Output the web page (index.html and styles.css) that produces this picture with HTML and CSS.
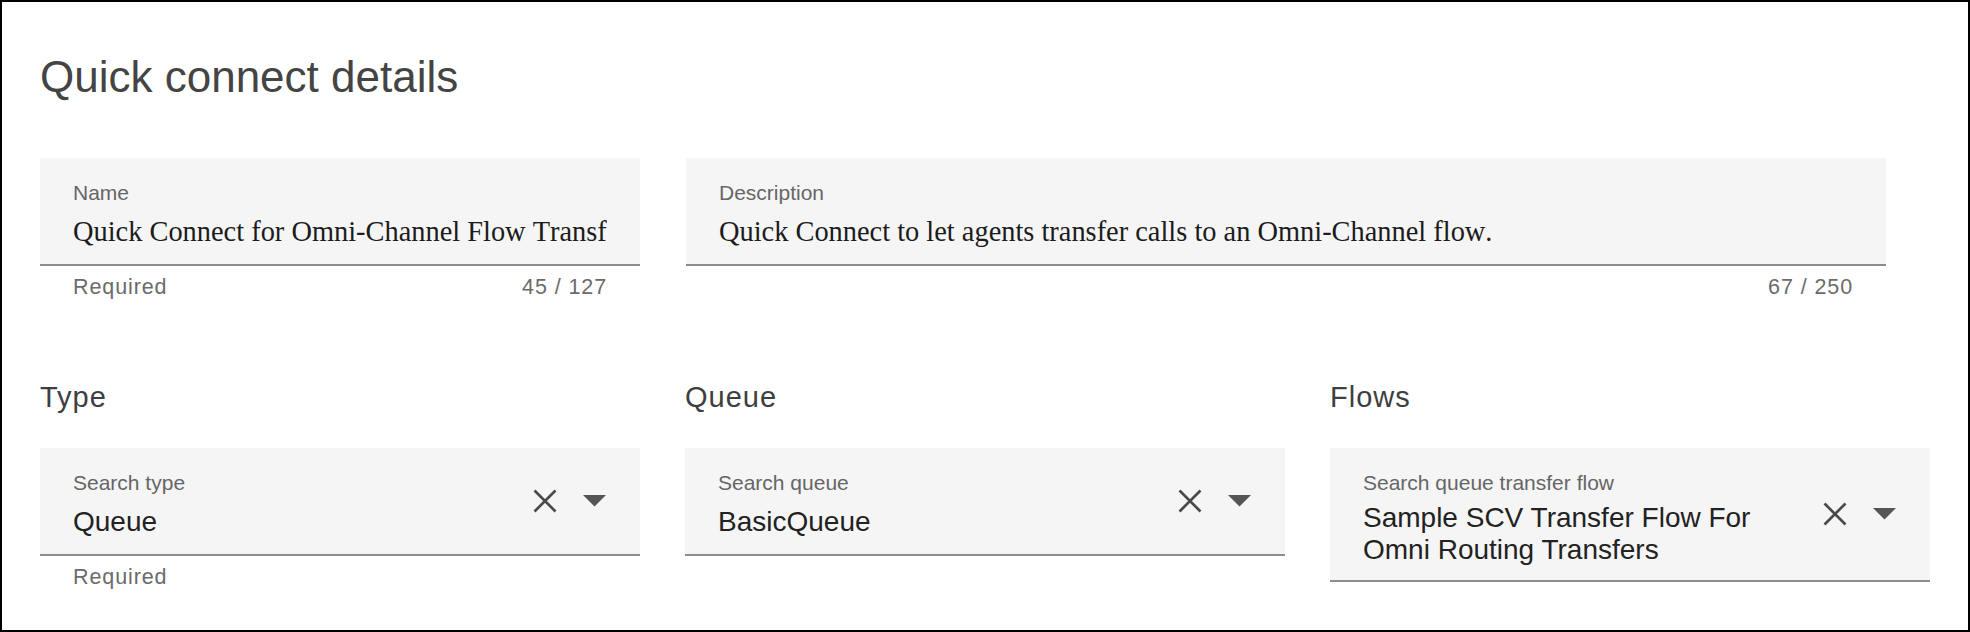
FILE: index.html
```html
<!DOCTYPE html>
<html lang="en">
<head>
<meta charset="utf-8">
<title>Quick connect details</title>
<link rel="stylesheet" href="styles.css">
</head>
<body>
<div class="page">
  <h1 class="title">Quick connect details</h1>

  <div class="row row-top">
    <div class="col">
      <div class="field">
        <div class="field-body">
          <div class="label">Name</div>
          <div class="value value-serif">Quick Connect for Omni-Channel Flow Transfers</div>
        </div>
      </div>
      <div class="helper"><span>Required</span><span class="counter">45 / 127</span></div>
    </div>
    <div class="col">
      <div class="field">
        <div class="field-body">
          <div class="label">Description</div>
          <div class="value value-serif">Quick Connect to let agents transfer calls to an Omni-Channel flow.</div>
        </div>
      </div>
      <div class="helper"><span class="counter">67 / 250</span></div>
    </div>
  </div>

  <div class="row row-bottom">
    <div class="col">
      <h2 class="heading">Type</h2>
      <div class="field">
        <div class="field-body">
          <div class="label">Search type</div>
          <div class="value">Queue</div>
        </div>
        <div class="icons">
          <svg class="icon-close" width="24" height="24" viewBox="0 0 24 24"><path d="M1.5 1.5L22.5 22.5M22.5 1.5L1.5 22.5"/></svg>
          <svg class="icon-arrow" width="23" height="12" viewBox="0 0 23 12"><polygon points="0,0 23,0 11.5,11.5"/></svg>
        </div>
      </div>
      <div class="helper"><span>Required</span></div>
    </div>
    <div class="col">
      <h2 class="heading">Queue</h2>
      <div class="field">
        <div class="field-body">
          <div class="label">Search queue</div>
          <div class="value">BasicQueue</div>
        </div>
        <div class="icons">
          <svg class="icon-close" width="24" height="24" viewBox="0 0 24 24"><path d="M1.5 1.5L22.5 22.5M22.5 1.5L1.5 22.5"/></svg>
          <svg class="icon-arrow" width="23" height="12" viewBox="0 0 23 12"><polygon points="0,0 23,0 11.5,11.5"/></svg>
        </div>
      </div>
    </div>
    <div class="col">
      <h2 class="heading">Flows</h2>
      <div class="field field-multi">
        <div class="field-body">
          <div class="label">Search queue transfer flow</div>
          <div class="value">Sample SCV Transfer Flow For Omni Routing Transfers</div>
        </div>
        <div class="icons">
          <svg class="icon-close" width="24" height="24" viewBox="0 0 24 24"><path d="M1.5 1.5L22.5 22.5M22.5 1.5L1.5 22.5"/></svg>
          <svg class="icon-arrow" width="23" height="12" viewBox="0 0 23 12"><polygon points="0,0 23,0 11.5,11.5"/></svg>
        </div>
      </div>
    </div>
  </div>
</div>
</body>
</html>
```

FILE: styles.css
```css
html, body {
  margin: 0;
  padding: 0;
}

body {
  width: 1970px;
  height: 632px;
  background: #ffffff;
  font-family: "Liberation Sans", Arial, sans-serif;
  overflow: hidden;
}

.page {
  box-sizing: border-box;
  height: 632px;
  border: 2px solid #000000;
  padding: 49px 0 0 38px;
}

.title {
  margin: 0 0 55px;
  font-size: 44px;
  line-height: 52px;
  font-weight: 400;
  color: #444444;
}

.row-top {
  display: grid;
  grid-template-columns: 600px 1200px;
  column-gap: 46px;
  align-items: start;
}

.row-bottom {
  display: grid;
  grid-template-columns: repeat(3, 600px);
  column-gap: 45px;
  margin-top: 81px;
  align-items: start;
}

.col {
  min-width: 0;
}

.heading {
  margin: 0 0 34px;
  font-size: 29px;
  line-height: 34px;
  font-weight: 400;
  letter-spacing: 1px;
  color: #3e3e3e;
}

.field {
  display: flex;
  align-items: center;
  background: #f5f5f5;
  border-bottom: 2px solid #8c8c8c;
  padding: 0 33px;
}

.field-body {
  flex: 1;
  min-width: 0;
  padding: 23px 0 16px;
}

.label {
  font-size: 21px;
  line-height: 24px;
  color: #666666;
}

.value {
  margin-top: 11px;
  font-size: 28px;
  line-height: 32px;
  color: #222222;
}

.value-serif {
  font-family: "Liberation Serif", "Times New Roman", serif;
  font-size: 28.4px;
  font-kerning: none;
  white-space: nowrap;
  overflow: hidden;
  color: #1c1c1c;
}

.field-multi .field-body {
  padding-bottom: 14px;
}

.field-multi .value {
  margin-top: 7px;
}

.icons {
  display: flex;
  align-items: center;
  gap: 26px;
  margin-left: 35px;
  margin-right: 1px;
}

.icon-close path {
  stroke: #4a4a4a;
  stroke-width: 2.7;
  fill: none;
}

.icon-arrow polygon {
  fill: #555555;
}

.helper {
  display: flex;
  justify-content: space-between;
  margin-top: 9px;
  padding: 0 33px;
  font-size: 21.5px;
  line-height: 24px;
  letter-spacing: 0.9px;
  color: #6b6b6b;
}

.counter {
  margin-left: auto;
}
```
